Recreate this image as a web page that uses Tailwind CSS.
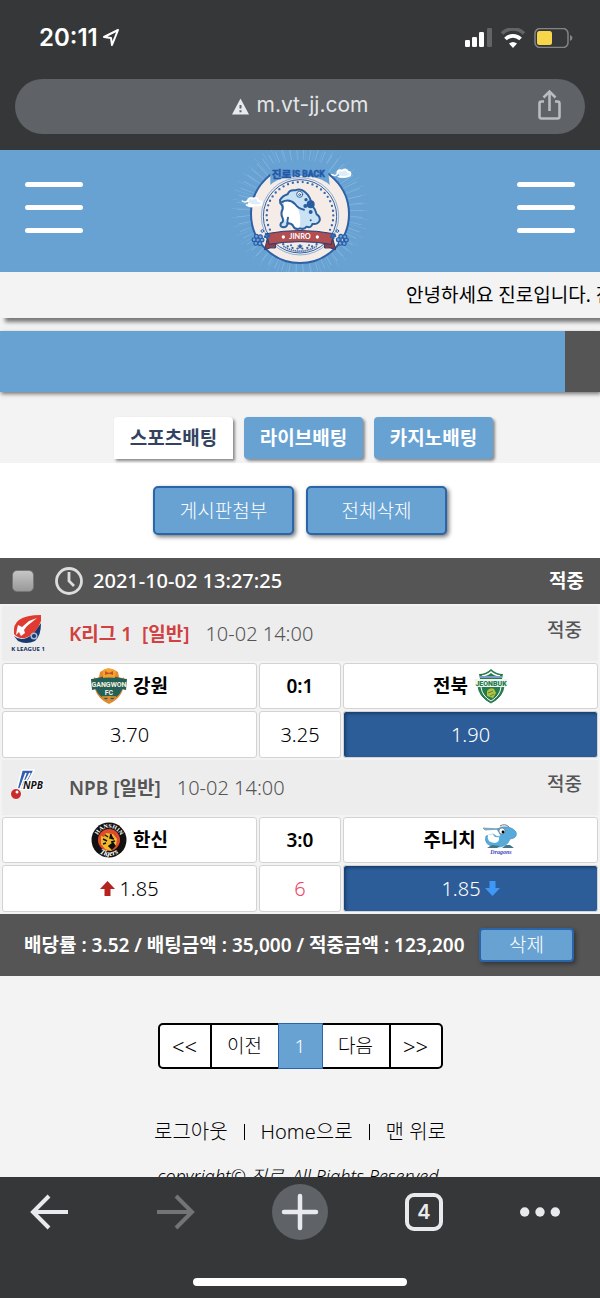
<!DOCTYPE html>
<html lang="ko">
<head>
  <meta charset="UTF-8" />
  <meta name="viewport" content="width=device-width, initial-scale=1" />
  <title>진로</title>
  <script src="https://cdn.jsdelivr.net/npm/@tailwindcss/browser@4"></script>
</head>
<body class="flex h-screen flex-col overflow-hidden bg-[#f3f3f3] font-['Noto_Sans','Noto_Sans_CJK_KR',sans-serif] text-[19px] leading-6 text-black">

  <!-- Browser top -->
  <header class="shrink-0 bg-[#363739] px-[15px] pb-4 font-['Inter','Noto_Sans_CJK_KR',sans-serif]">
    <div class="flex h-[79px] items-center justify-between pb-1 pl-6 pr-3">
      <div class="flex items-center gap-1 text-white">
        <span class="text-2xl font-semibold">20:11</span>
        <svg class="h-[19px] w-[18px]" viewBox="0 0 18 19" fill="none" stroke="white" stroke-width="2" stroke-linejoin="round"><path d="M16 2 L2 9 L9 10 L10 17 Z" /></svg>
      </div>
      <div class="flex items-center gap-[9px]">
        <svg class="h-5 w-[27px]" viewBox="0 0 27 20">
          <g fill="white"><rect x="0" y="12" width="5" height="7" rx="1.3" /><rect x="7" y="9" width="5" height="10" rx="1.3" /><rect x="14" y="4" width="5" height="15" rx="1.3" /></g>
          <rect x="22" y="0" width="5" height="19" rx="1.3" fill="#636466" />
        </svg>
        <svg class="h-5 w-6" viewBox="0 0 24 20" fill="none">
          <path d="M1 5.500a15.500 15.500 0 0 1 22 0" stroke="#636466" stroke-width="3.500" />
          <path d="M4.500 11a10.500 10.500 0 0 1 15 0" stroke="white" stroke-width="3.800" />
          <path d="M12 20 L8 15.500 Q12 12.500 16 15.500Z" fill="white" />
        </svg>
        <svg class="h-5 w-[39px]" viewBox="0 0 39 20">
          <rect x="1" y="0.500" width="33" height="19" rx="5" fill="none" stroke="#838486" stroke-width="1.500" />
          <path d="M36 7v6q2.500-1 2.500-3t-2.500-3" fill="#838486" />
          <rect x="3" y="3" width="15" height="14" rx="2.500" fill="#f8d64b" />
        </svg>
      </div>
    </div>
    <div class="relative flex h-[55px] items-center justify-center gap-2 rounded-full bg-[#5f6266] pb-1 text-[#e4e6e9]">
      <svg class="mt-1 h-[17px] w-[17px]" viewBox="0 0 17 17"><path d="M8.500 0.500 L17 16.500 H0Z" fill="#e8eaed" /><path d="M8.500 7v3.500M8.500 12.200v2" stroke="#5f6266" stroke-width="2" /></svg>
      <span class="text-[21px]">m.vt-jj.com</span>
      <button type="button" aria-label="공유" class="absolute right-6">
        <svg class="block h-8 w-[23px]" viewBox="0 0 23 32" fill="none" stroke="#b9bcc0" stroke-width="2.600"><path d="M6 12.500H3.500Q1.500 12.500 1.500 14.500V27.500Q1.500 29.500 3.500 29.500H19.500Q21.500 29.500 21.500 27.500V14.500Q21.500 12.500 19.500 12.500H17M11.500 22V3M5.500 8.500l6-6 6 6" /></svg>
      </button>
    </div>
  </header>

  <main class="min-h-0 flex-1 overflow-hidden">
    <!-- Site header -->
    <div class="flex items-center justify-between bg-[#67a2d3] px-[25px]">
      <button type="button" aria-label="메뉴" class="flex w-[58px] flex-col gap-[18px] pb-2">
        <span class="h-[5px] rounded-full bg-white"></span>
        <span class="h-[5px] rounded-full bg-white"></span>
        <span class="h-[5px] rounded-full bg-white"></span>
      </button>
      <a href="#" aria-label="진로">
        <svg class="block h-[122px] w-[200px]" viewBox="0 0 600 366">
          <!-- rays -->
          <g fill="none" stroke="#8cbce1">
            <circle cx="300" cy="180" r="155" stroke-width="70" stroke-dasharray="2 16" opacity=".8" />
            <circle cx="300" cy="180" r="175" stroke-width="60" stroke-dasharray="2 22" opacity=".4" />
          </g>
          <circle cx="300" cy="192" r="147" fill="#f5ece8" stroke="#2d61a8" stroke-width="6" />
          <circle cx="300" cy="199" r="110" fill="#f5ece8" stroke="#2d61a8" stroke-width="3" />
          <circle cx="300" cy="199" r="116" fill="none" stroke="#5e91c6" stroke-width="2" />
          <circle cx="300" cy="196" r="100" fill="none" stroke="#3568ad" stroke-width="7" stroke-linecap="round" stroke-dasharray="0 14.960" />
          <path d="M211 42 L300 28 L382 42 L389 105 Q365 80 300 77 Q235 80 211 105Z" fill="#67a2d3" />
          <g fill="#2458a7" stroke="#2458a7" stroke-width="1.500" font-weight="700">
            <text x="215" y="84" font-size="32" font-family="Noto Sans CJK KR, sans-serif">진로</text>
            <text x="277" y="82" font-size="26" font-family="Roboto, sans-serif">IS BACK</text>
          </g>
          <!-- clouds -->
          <g fill="none" stroke="white" stroke-linecap="round">
            <path d="M395 73q12 8 18-2M414 79q8 4 15 0" stroke-width="4" />
            <path d="M412 69q2-12 14-7q14-8 18 4q10-1 6 10q-14 8-30 3" fill="#dcecf8" stroke-width="6" />
            <path d="M127 153q8 6 15 0" stroke-width="4" />
            <path d="M143 154q3-14 17-8q12-6 14 6q14 2 10 12q-22 5-38-2M140 165q14 8 22 2" fill="#dcecf8" stroke-width="6" />
          </g>
          <!-- frog -->
          <path d="M240 150 Q248 137 263 133 Q267 119 285 121 Q302 114 314 125 Q332 139 336 166 Q347 178 350 193 Q361 199 359 212 Q353 224 337 222 Q334 235 319 230 Q313 240 300 235 Q286 241 280 229 Q261 220 252 231 Q240 235 241 222 Q252 216 246 203 Q240 190 248 177 Q249 168 240 159Z" fill="#c9e3f4" />
          <path d="M252 154 Q272 145 288 165 Q306 192 299 232 Q282 235 279 220 Q262 221 253 208 Q242 192 252 176Z" fill="white" />
          <g fill="none" stroke="#2c609f" stroke-width="6" stroke-linecap="round" stroke-linejoin="round">
            <path d="M240 150 Q248 137 263 133 Q267 119 285 121 Q302 114 314 125 Q332 139 336 166 Q347 178 350 193 Q361 199 359 212 Q353 224 337 222 Q334 235 319 230 Q313 240 300 235 Q286 241 280 229 Q275 219 262 220 Q263 232 249 232 Q238 230 243 219 Q253 216 247 202 Q241 190 248 177 Q250 167 241 160Z" />
            <path d="M246 156 Q268 145 285 162 Q295 176 312 179" />
            <path d="M264 203 Q261 212 263 220" />
            <circle cx="299" cy="133" r="9" fill="white" stroke-width="3" /><circle cx="299" cy="134" r="3" stroke-width="3" />
          </g>
          <g fill="#295da1"><circle cx="332" cy="163" r="12" /><circle cx="318" cy="149" r="5" /><circle cx="316" cy="168" r="6" /><circle cx="332" cy="186" r="6" /><circle cx="332" cy="211" r="3" /></g>
          <!-- ribbon -->
          <path d="M205 252 L194 299 Q212 291 226 294 L228 272 M395 252 L407 299 Q390 291 374 294 L372 272" fill="#943e43" stroke="#253d72" stroke-width="3" />
          <path d="M200 251 Q300 232 400 251 L394 283 Q300 267 207 283Z" fill="#b04e51" stroke="#253d72" stroke-width="3" />
          <circle cx="250" cy="261" r="5" fill="white" /><circle cx="352" cy="261" r="5" fill="white" />
          <text x="300" y="268" text-anchor="middle" fill="white" font-size="22" font-weight="700" font-family="Lato, sans-serif">JINRO</text>
          <path d="M250 289 Q300 318 350 289" fill="none" stroke="#3e6ca7" stroke-width="5" stroke-dasharray="4 2" />
          <path d="M300 281l3 5 6 1-5 4 1 6-5-3-5 3 1-6-5-4 6-1Z" fill="#2d61a8" />
          <circle cx="273" cy="286" r="3" fill="#2d61a8" /><circle cx="327" cy="286" r="3" fill="#2d61a8" />
          <!-- flowers -->
          <g fill="none" stroke-linecap="round">
            <g stroke="#285da7" stroke-width="15"><circle cx="174" cy="270" r="12" stroke-dasharray="0 12.560" /><circle cx="427" cy="270" r="12" stroke-dasharray="0 12.560" /></g>
            <g stroke="#6fa5d7" stroke-width="8"><circle cx="174" cy="270" r="12" stroke-dasharray="0 12.560" /><circle cx="427" cy="270" r="12" stroke-dasharray="0 12.560" /></g>
            <g stroke="#2d61a8" stroke-width="8"><circle cx="201" cy="258" r="6" stroke-dasharray="0 7.540" /><circle cx="399" cy="258" r="6" stroke-dasharray="0 7.540" /></g>
            <g stroke="#2d61a8" stroke-width="3" fill="#dcecf8"><circle cx="187" cy="243" r="4" /><circle cx="412" cy="243" r="4" /><circle cx="174" cy="270" r="4" /><circle cx="427" cy="270" r="4" /><circle cx="201" cy="258" r="2" /><circle cx="399" cy="258" r="2" /></g>
          </g>
        </svg>
      </a>
      <button type="button" aria-label="내 정보" class="flex w-[58px] flex-col gap-[18px] pb-2">
        <span class="h-[5px] rounded-full bg-white"></span>
        <span class="h-[5px] rounded-full bg-white"></span>
        <span class="h-[5px] rounded-full bg-white"></span>
      </button>
    </div>

    <!-- Scrolling notice -->
    <div class="flex h-[46px] items-center overflow-hidden whitespace-nowrap pl-[406px] shadow-[5px_4px_4px_#777]">안녕하세요 진로입니다. 진</div>

    <div class="mt-[13px] flex h-[61px] justify-end bg-[#67a2d3] shadow-[1px_2px_4px_#777]">
      <div class="w-[35px] bg-[#555]"></div>
    </div>

    <!-- Betting tabs -->
    <nav class="flex justify-center gap-[11px] pb-1 pl-[7px] pt-[25px] font-semibold">
      <a href="#" class="flex h-[42px] w-[119px] items-center justify-center rounded-t bg-white text-[#344261] shadow-[2px_2px_3px_#888]">스포츠배팅</a>
      <a href="#" class="flex h-[42px] w-[119px] items-center justify-center rounded bg-[#67a2d3] text-white shadow-[2px_2px_3px_#888]">라이브배팅</a>
      <a href="#" class="flex h-[42px] w-[119px] items-center justify-center rounded bg-[#67a2d3] text-white shadow-[2px_2px_3px_#888]">카지노배팅</a>
    </nav>

    <div class="flex justify-center gap-3 bg-white py-[23px] font-light text-white">
      <button type="button" class="h-[49px] w-[141px] rounded-[5px] border-2 border-[#2a65a9] bg-[#67a2d3] shadow-[2px_2px_4px_#777]">게시판첨부</button>
      <button type="button" class="h-[49px] w-[141px] rounded-[5px] border-2 border-[#2a65a9] bg-[#67a2d3] shadow-[2px_2px_4px_#777]">전체삭제</button>
    </div>

    <!-- Bet slip -->
    <section>
      <div class="flex h-[46px] items-center bg-[#555] pl-3 pr-4 font-semibold text-white">
        <input type="checkbox" aria-label="선택" class="h-[22px] w-[22px] appearance-none rounded-[5px] border border-[#777] bg-linear-to-b from-[#c6c6c6] to-[#999]" />
        <svg class="ml-[21px] mr-[10px] h-7 w-7" viewBox="0 0 28 28" fill="none" stroke="#ddd" stroke-width="2.800"><circle cx="14" cy="14" r="12.500" /><path d="M14 5v9l5 5" /></svg>
        <time class="text-xl font-medium">2021-10-02 13:27:25</time>
        <span class="ml-auto">적중</span>
      </div>

      <table class="w-full table-fixed border-separate border-spacing-[2px] text-center">
        <colgroup><col /><col class="w-[82px]" /><col /></colgroup>
        <tbody>
          <tr class="h-[55px] text-left">
            <td colspan="3" class="bg-[#ededed] p-0">
              <div class="flex items-center pl-[7px] pr-4">
                <svg class="h-10 w-[38px]" viewBox="0 0 38 40">
                  <path d="M5 22 Q13 29 24 20 L32 9 Q32 22 26 27 Q17 31 9 27Z" fill="#173a70" />
                  <path d="M5 20 Q4 10 10 6 Q17 1 32 1 L32 7 Q27 21 16 24 Q9 25 5 20Z" fill="#df3b31" />
                  <path d="M9 11l4 2 7-6 8-3-10 8-3 4 1 3-4 3-2-4-3 3 1-6Z" fill="white" />
                  <circle cx="25" cy="22" r="2.800" fill="#173a70" stroke="#a9bbd6" stroke-width="1.500" />
                  <text x="19" y="37" text-anchor="middle" fill="#152e5d" font-size="6" font-weight="700" font-family="Open Sans, sans-serif">K LEAGUE 1</text>
                </svg>
                <span class="ml-[22px] font-semibold text-[#d0413f]">K리그 1&nbsp; [일반]</span>
                <time class="ml-4 text-xl leading-6 font-light text-[#555]">10-02 14:00</time>
                <span class="ml-auto pb-2 font-medium text-[#555]">적중</span>
              </div>
            </td>
          </tr>
          <tr class="h-[46px] font-semibold">
            <td class="rounded-[3px] border border-[#d3d3d3] bg-white p-0">
              <div class="flex items-center justify-center gap-[6px]">
                <svg class="h-[38px] w-9" viewBox="0 0 36 38">
                  <path d="M9 5 Q18-2 27 5 L28 10 Q32 12 33 10 Q35 29 18 37 Q1 29 3 10 Q5 12 8 10Z" fill="#e68a32" />
                  <path d="M4 12 Q18 6 32 12 Q34 28 18 34 Q2 28 4 12Z" fill="#245f58" />
                  <path d="M12 3 Q18-1 25 4 L24 11 H12Z" fill="#f5a22e" /><path d="M14 4v4q4-2 8 0V4l-4 2Z" fill="#bd562a" />
                  <path d="M0 12 Q18 9 36 12 L35 23 Q18 18 1 23Z" fill="#245f58" />
                  <text x="18" y="20" text-anchor="middle" font-size="7" font-weight="700" fill="#f5f1df" font-family="Roboto, sans-serif">GANGWON</text>
                  <text x="18" y="28" text-anchor="middle" font-size="7" font-weight="700" fill="#f5f1df" font-family="Roboto, sans-serif">FC</text>
                  <path d="M11 30h14M15 33h6" stroke="#b48b37" stroke-width="2" /><path d="M18 29v7" stroke="#e68a32" stroke-width="3" />
                </svg>
                강원
              </div>
            </td>
            <td class="rounded-[3px] border border-[#d3d3d3] bg-white p-0">0:1</td>
            <td class="rounded-[3px] border border-[#d3d3d3] bg-white p-0">
              <div class="flex items-center justify-center gap-[6px]">
                전북
                <svg class="h-9 w-[34px]" viewBox="0 0 34 36">
                  <path d="M5 6 Q12 6 17 1 Q22 6 29 6 L28 11 H6Z" fill="#267c4d" />
                  <path d="M8 8 Q14 7 17 4 Q20 7 26 8" fill="none" stroke="white" stroke-width="1.500" />
                  <path d="M4 18 H30 Q29 29 17 35 Q5 29 4 18Z" fill="#267c4d" stroke="#267c4d" /><path d="M7 19 Q8 28 17 33 Q26 28 27 19" fill="none" stroke="white" />
                  <path d="M6 9H28" stroke="#8198c5" stroke-width="2" />
                  <path d="M0 11H34L32 19H2Z" fill="#eff6f1" />
                  <text x="17" y="18" text-anchor="middle" font-size="7" font-weight="900" fill="#267c4d" font-family="Roboto, sans-serif">JEONBUK</text>
                  <path d="M13 23q3-4 7-2l2 4-3 5-6-2Z" fill="#b5c23d" /><path d="M14 25l5-2M16 28l4-2" stroke="#58883a" />
                </svg>
              </div>
            </td>
          </tr>
          <tr class="h-[47px] text-xl leading-6 font-light">
            <td class="rounded-[3px] border border-[#d3d3d3] bg-white p-0">3.70</td>
            <td class="rounded-[3px] border border-[#d3d3d3] bg-white p-0">3.25</td>
            <td class="rounded-[3px] border border-[#d3d3d3] bg-[#2c5d98] p-0 text-white shadow-[inset_2px_2px_3px_#193f70]">1.90</td>
          </tr>
          <tr class="h-[55px] text-left">
            <td colspan="3" class="bg-[#ededed] p-0">
              <div class="flex items-center pl-[7px] pr-4">
                <svg class="h-10 w-[38px]" viewBox="0 0 38 40">
                  <path d="M13 2H25L15 21H8Z" fill="#315eaf" stroke="white" stroke-width="1.500" /><path d="M17 5L11 21M21 5L13 20" stroke="white" stroke-width="1.600" />
                  <text x="14" y="21" font-size="10" font-style="italic" font-weight="700" fill="#111" stroke="white" stroke-width="2" paint-order="stroke" font-family="Open Sans, sans-serif">NPB</text>
                  <circle cx="7" cy="26" r="5.500" fill="#c92c2e" stroke="white" /><circle cx="8" cy="24" r="1.500" fill="white" />
                </svg>
                <span class="ml-[22px] font-semibold text-[#555]">NPB [일반]</span>
                <time class="ml-4 text-xl leading-6 font-light text-[#555]">10-02 14:00</time>
                <span class="ml-auto pb-2 font-medium text-[#555]">적중</span>
              </div>
            </td>
          </tr>
          <tr class="h-[46px] font-semibold">
            <td class="rounded-[3px] border border-[#d3d3d3] bg-white p-0">
              <div class="flex items-center justify-center gap-[6px]">
                <svg class="h-9 w-9" viewBox="0 0 36 36">
                  <defs><path id="hanshinTop" d="M6 18a12 12 0 0 1 24 0" /><path id="hanshinBottom" d="M2 18a16 16 0 0 0 32 0" /></defs>
                  <circle cx="18" cy="18" r="17.500" fill="#111" /><circle cx="18" cy="18" r="11" fill="#e24a2c" />
                  <path d="M10 14l3 1 2-4 7 1 4 5-1 7-5 5-6-2-4-5Z" fill="#efb92b" />
                  <path d="M12 17l4 2M14 13l3 2M20 12l-1 4 4 1M12 22l3-1M20 20l4-1M18 24l4-3 2 3-3 3Z" fill="#111" stroke="#111" stroke-width="1.500" />
                  <g fill="white" font-family="Liberation Serif, serif" font-weight="700" text-anchor="middle">
                    <text font-size="6"><textPath href="#hanshinTop" startOffset="50%">HANSHIN</textPath></text>
                    <text font-size="8" font-style="italic"><textPath href="#hanshinBottom" startOffset="50%">Tigers</textPath></text>
                  </g>
                </svg>
                한신
              </div>
            </td>
            <td class="rounded-[3px] border border-[#d3d3d3] bg-white p-0">3:0</td>
            <td class="rounded-[3px] border border-[#d3d3d3] bg-white p-0">
              <div class="flex items-center justify-center gap-[6px]">
                주니치
                <svg class="h-[34px] w-9" viewBox="0 0 36 34">
                  <path d="M4 13 Q1 22 13 24 Q25 25 28 16 Q36 15 34 9 Q30 3 20 4 L15 6 L19 13 Q15 15 11 11Z" fill="#58aada" stroke="#4b97c4" stroke-width=".7" />
                  <path d="M6 12 Q4 19 13 20 Q18 19 17 14 Q12 15 11 11Z" fill="white" />
                  <path d="M1 5L19 6 L3 7Z" fill="#73b9df" stroke="#6b92ab" stroke-width=".7" /><path d="M18 3q5-3 9 1" fill="none" stroke="#777" />
                  <circle cx="20" cy="8" r="3" fill="white" stroke="#35556d" stroke-width=".5" /><circle cx="21" cy="9" r="1.400" />
                  <path d="M10 22L5 25H15L18 23ZM24 22L20 25H32L28 22Z" fill="#437589" />
                  <text x="19" y="31" text-anchor="middle" font-size="6" font-style="italic" font-weight="700" fill="#3a42c4" font-family="Liberation Serif, serif">Dragons</text>
                </svg>
              </div>
            </td>
          </tr>
          <tr class="h-[47px] text-xl leading-6 font-light">
            <td class="rounded-[3px] border border-[#d3d3d3] bg-white p-0">
              <div class="flex items-center justify-center gap-1">
                <svg class="h-[15px] w-[15px]" viewBox="0 0 15 15"><path d="M7.500 0L15 8H10.500V15H4.500V8H0Z" fill="#b4231f" /></svg>
                1.85
              </div>
            </td>
            <td class="rounded-[3px] border border-[#d3d3d3] bg-white p-0 text-[#ef4565]">6</td>
            <td class="rounded-[3px] border border-[#d3d3d3] bg-[#2c5d98] p-0 text-white shadow-[inset_2px_2px_3px_#193f70]">
              <div class="flex items-center justify-center gap-1">
                1.85
                <svg class="h-[15px] w-[15px]" viewBox="0 0 15 15"><path d="M7.500 15L15 7H10.500V0H4.500V7H0Z" fill="#3f98f5" /></svg>
              </div>
            </td>
          </tr>
        </tbody>
      </table>

      <div class="flex h-[62px] items-center justify-between whitespace-nowrap bg-[#555] pl-6 pr-[26px] font-semibold text-white">
        <span>배당률 : 3.52 / 배팅금액 : 35,000 / 적중금액 : 123,200</span>
        <button type="button" class="h-[34px] w-[95px] rounded border-2 border-[#2a65a9] bg-[#67a2d3] font-light shadow-[2px_2px_4px_#333]">삭제</button>
      </div>
    </section>

    <!-- Pagination -->
    <nav class="mt-[47px] flex justify-center font-light">
      <a href="#" class="flex h-[46px] w-[54px] items-center justify-center rounded-l-[5px] border-2 border-black bg-white text-[22px]">&lt;&lt;</a>
      <a href="#" class="flex h-[46px] w-[66px] items-center justify-center border-y-2 border-black bg-white">이전</a>
      <a href="#" class="flex h-[46px] w-[45px] items-center justify-center border border-[#2a65a9] bg-[#67a2d3] text-white">1</a>
      <a href="#" class="flex h-[46px] w-[66px] items-center justify-center border-y-2 border-black bg-white">다음</a>
      <a href="#" class="flex h-[46px] w-[54px] items-center justify-center rounded-r-[5px] border-2 border-black bg-white text-[22px]">&gt;&gt;</a>
    </nav>

    <footer class="mt-[51px] text-center">
      <div class="flex items-center justify-center gap-4 text-xl leading-6 font-light">
        <a href="#">로그아웃</a>
        <span class="h-4 w-px bg-black"></span>
        <a href="#">Home으로</a>
        <span class="h-4 w-px bg-black"></span>
        <a href="#">맨 위로</a>
      </div>
      <p class="mt-5 text-lg leading-6 font-light italic">copyright© 진로. All Rights Reserved.</p>
    </footer>
  </main>

  <!-- Browser bottom bar -->
  <nav class="flex h-[121px] shrink-0 flex-col items-center justify-between bg-[#363739] pb-3 pt-[7px]">
    <div class="flex w-full items-center justify-between pl-[30px] pr-10">
      <button type="button" aria-label="뒤로" class="w-[50px]"><svg class="h-[38px] w-[38px]" viewBox="0 0 38 38" fill="none" stroke="#e8eaed" stroke-width="4"><path d="M38 19H4M19 3L3 19L19 35" /></svg></button>
      <button type="button" aria-label="앞으로"><svg class="h-[38px] w-[38px]" viewBox="0 0 38 38" fill="none" stroke="#737476" stroke-width="4"><path d="M0 19H34M19 3L35 19L19 35" /></svg></button>
      <button type="button" aria-label="새 탭" class="flex h-[56px] w-[56px] items-center justify-center rounded-full bg-[#5f6266]"><svg class="h-[38px] w-[38px]" viewBox="0 0 38 38" stroke="#e8eaed" stroke-width="4.500" stroke-linecap="round"><path d="M19 3V35M3 19H35" /></svg></button>
      <button type="button" class="flex h-[38px] w-[38px] items-center justify-center rounded-[9px] border-4 border-[#e8eaed] font-['Inter',sans-serif] text-xl font-semibold text-[#e8eaed]">4</button>
      <button type="button" aria-label="더보기"><svg class="h-[10px] w-10" viewBox="0 0 40 10" fill="#e8eaed"><circle cx="4.700" cy="5" r="4.700" /><circle cx="20" cy="5" r="4.700" /><circle cx="35.300" cy="5" r="4.700" /></svg></button>
    </div>
    <div class="h-2 w-[214px] rounded-full bg-white"></div>
  </nav>
</body>
</html>
